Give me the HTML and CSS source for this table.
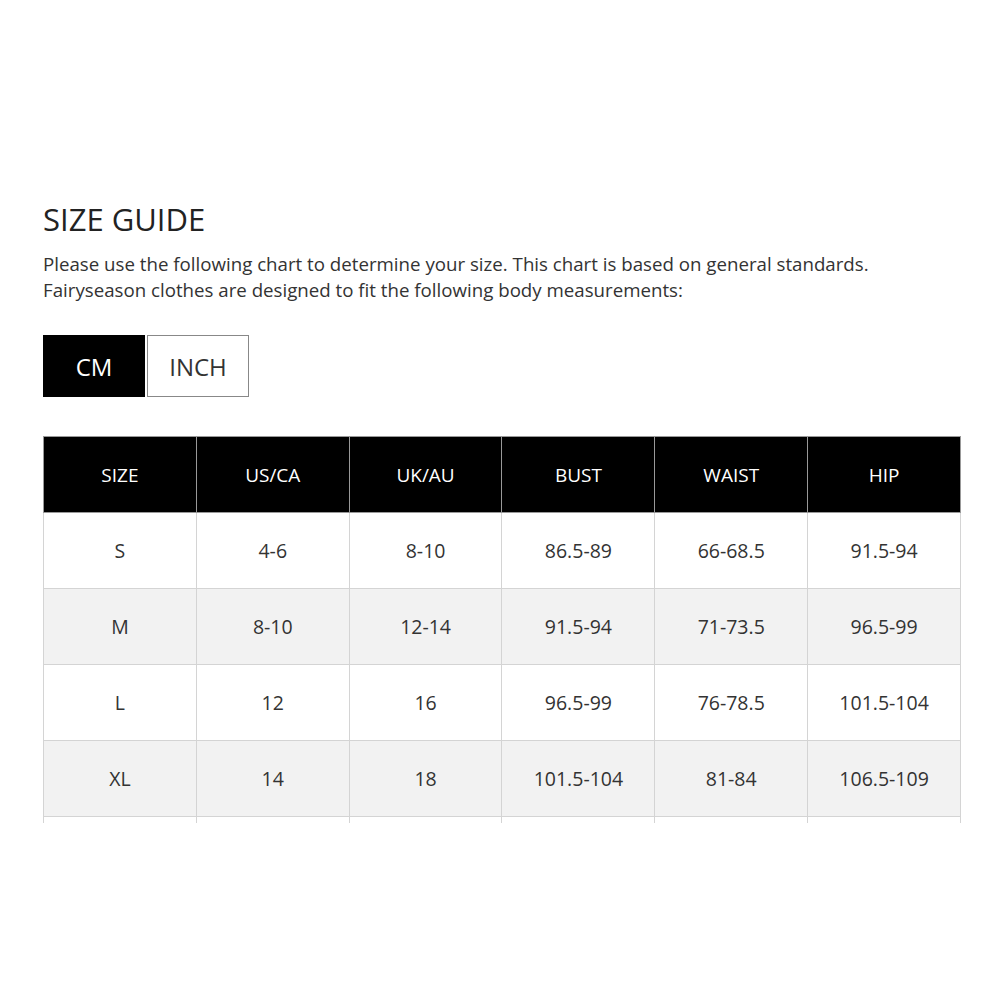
FILE: index.html
```html
<!DOCTYPE html>
<html>
<head>
<meta charset="utf-8">
<link rel="stylesheet" href="styles.css">
</head>
<body>
<div class="page">
  <h1 class="title">SIZE GUIDE</h1>
  <p class="intro">Please use the following chart to determine your size. This chart is based on general standards.<br>Fairyseason clothes are designed to fit the following body measurements:</p>
  <div class="units">
    <div class="unit active">CM</div>
    <div class="unit">INCH</div>
  </div>
  <div class="table-wrap">
    <table class="chart">
      <thead>
        <tr><th>SIZE</th><th>US/CA</th><th>UK/AU</th><th>BUST</th><th>WAIST</th><th>HIP</th></tr>
      </thead>
      <tbody>
        <tr><td>S</td><td>4-6</td><td>8-10</td><td>86.5-89</td><td>66-68.5</td><td>91.5-94</td></tr>
        <tr><td>M</td><td>8-10</td><td>12-14</td><td>91.5-94</td><td>71-73.5</td><td>96.5-99</td></tr>
        <tr><td>L</td><td>12</td><td>16</td><td>96.5-99</td><td>76-78.5</td><td>101.5-104</td></tr>
        <tr><td>XL</td><td>14</td><td>18</td><td>101.5-104</td><td>81-84</td><td>106.5-109</td></tr>
        <tr class="clipped"><td></td><td></td><td></td><td></td><td></td><td></td></tr>
      </tbody>
    </table>
  </div>
</div>
</body>
</html>
```

FILE: styles.css
```css
html, body {
  margin: 0;
  padding: 0;
  background: #fff;
}
.page {
  padding: 198px 39px 0 43px;
  font-family: "Open Sans", "Noto Sans", sans-serif;
  color: #333;
}
.title {
  margin: 0;
  font-size: 31px;
  font-weight: 400;
  line-height: 42px;
  color: #222;
}
.intro {
  margin: 11px 0 0 0;
  font-size: 18.7px;
  line-height: 26px;
  color: #333;
  white-space: nowrap;
}
.units {
  display: flex;
  gap: 2px;
  margin-top: 32px;
}
.unit {
  width: 100px;
  height: 60px;
  border: 1px solid #888;
  display: flex;
  align-items: center;
  justify-content: center;
  font-size: 24px;
  color: #333;
  background: #fff;
}
.unit.active {
  background: #000;
  border-color: #000;
  color: #fff;
}
.table-wrap {
  margin-top: 39px;
  height: 387px;
  overflow: hidden;
}
.chart {
  width: 918px;
  border-collapse: collapse;
  table-layout: fixed;
}
.chart th, .chart td {
  border: 1px solid #d4d4d4;
  height: 75px;
  text-align: center;
  font-size: 19.5px;
  font-weight: 400;
  padding: 0;
}
.chart th {
  background: #000;
  color: #fff;
  border-color: #999;
  font-size: 19px;
}
.chart td {
  color: #333;
}
.chart tbody tr:nth-child(even) td {
  background: #f2f2f2;
}
```
